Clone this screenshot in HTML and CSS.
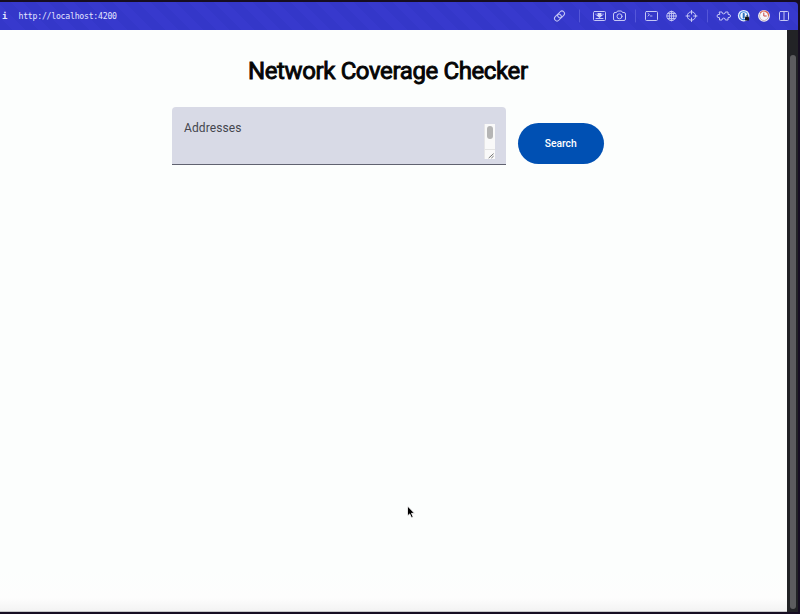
FILE: index.html
```html
<!DOCTYPE html>
<html lang="en">
<head>
<meta charset="utf-8">
<title>Network Coverage Checker</title>
<link rel="stylesheet" href="styles.css">
</head>
<body>
<div class="window">
  <header class="toolbar">
    <span class="info">i</span>
    <span class="url">http://localhost:4200</span>
    <svg class="tools" width="250" height="28" viewBox="550 2 250 28" fill="none" stroke="#c5c7f5" stroke-width="1" stroke-linecap="round" stroke-linejoin="round">
      <g transform="rotate(-45 559.5 16)"><rect x="553.5" y="13.5" width="7.5" height="5" rx="2.5"/><rect x="558" y="13.5" width="7.5" height="5" rx="2.5"/></g>
      <path d="M579.5 10v12M635.500 10v12M707.500 10v12" stroke="#5557d9"/>
      <rect x="593.500" y="11.500" width="12" height="9" rx="1"/>
      <path d="M596 18.500h7M596 14v.5M603 14v.5"/><path d="M597.500 13h4v2h1.500l-3.500 3-3.500-3h1.500z" fill="#d5d6fa" stroke="none"/>
      <path d="M615 12.500h1.500l1-1.500h4l1 1.500h1.500q1.500 0 1.500 1.500v5q0 1.500-1.500 1.500h-9q-1.500 0-1.500-1.500v-5q0-1.500 1.500-1.500z"/><circle cx="619.500" cy="16.300" r="2.500"/>
      <rect x="645.500" y="11.500" width="12" height="9" rx="1"/><path d="M648 13.500l1.500 1.200-1.500 1.300M650.500 16h1.500" stroke-width=".9"/>
      <g stroke-width=".9"><circle cx="671.500" cy="16" r="4.700"/><ellipse cx="671.500" cy="16" rx="2.200" ry="4.700"/><path d="M667 16h9M671.500 11.300v9.400M667.800 13.500h7.400M667.800 18.500h7.400"/></g>
      <circle cx="691.500" cy="16" r="4.200"/><path d="M691.500 10.500v3.500M691.500 18v3.500M686 16h3.500M693.500 16h3.500"/>
      <path d="M719.500 12h2.500q0 1.900 1.700 1.900t1.700-1.900h2.600v2.300q2.500-.2 2.500 1.700t-2.500 1.700v2.300h-2.600q0-1.900-1.700-1.900t-1.700 1.900h-2.500v-2.300q-2.500.2-2.500-1.700t2.500-1.700z"/>
      <g stroke="none"><circle cx="743.700" cy="15.700" r="5.800" fill="#e7efff"/><circle cx="743.700" cy="15.700" r="4.500" fill="#3781dc"/><circle cx="743.700" cy="15.700" r="3.400" fill="#f4f7ff"/><rect x="742.700" y="13" width="2" height="5.500" rx=".7" fill="#286fbc"/><rect x="745" y="17" width="4" height="3.500" rx=".5" fill="#15171c"/></g>
      <path d="M746 17v-.7q1-1.600 2 0v.7" stroke="#15171c" stroke-width=".8"/>
      <circle cx="764" cy="15.800" r="5.900" fill="#f7f6fa" stroke="none"/><path d="M761 12.500a4.600 4.600 0 1 0 7.600 3.300" stroke="#b9a0a5" stroke-width=".8"/><path d="M760.500 12.700a4.600 4.600 0 0 1 8.100 3.100" stroke="#dd6b54" stroke-width="1.200"/><path d="M763.800 13v3h2.500" stroke="#c84743"/>
      <rect x="779.500" y="11.500" width="9" height="9" rx="1"/><path d="M784 12v8.500"/>
    </svg>
  </header>
  <div class="viewport">
    <main class="page">
      <h1>Network Coverage Checker</h1>
      <form class="search">
        <div class="field">
          <label>Addresses</label>
          <div class="scroll">
            <span class="scroll-thumb"></span>
            <svg class="grip" width="10" height="10" viewBox="0 0 10 10" stroke="#555" stroke-width=".9"><path d="M3.500 9L9 4M6.500 9L9 6.800"/></svg>
          </div>
        </div>
        <button type="button">Search</button>
      </form>
    </main>
    <div class="scrollbar"><span></span></div>
  </div>
</div>
<svg class="cursor" width="10" height="15" viewBox="0 0 10 15"><path d="M1.500 1v10l2.200-2.100 1.800 3.900 1.700-.8-1.700-3.700h3z" fill="#000" stroke="#fff" stroke-width=".8"/></svg>
</body>
</html>
```
FILE: styles.css
```css
* { box-sizing: border-box; }
body {
  margin: 0;
  height: 614px;
  overflow: hidden;
  background: #160d22;
  font-family: Roboto, sans-serif;
}
.window {
  display: flex;
  flex-direction: column;
  height: 612px;
  padding-top: 2px;
}
.toolbar {
  display: flex;
  align-items: center;
  flex: 0 0 28px;
  width: 798px;
  border-radius: 0 4px 0 0;
  background: repeating-linear-gradient(45deg, #3437c9 0 9px, #3739cd 9px 18px);
  color: #e4e5ff;
  font: 8.2px/28px "DejaVu Sans Mono", monospace;
}
.url { letter-spacing: -.25px; }
.info {
  width: 18.500px;
  padding-left: 2px;
  font-size: 9px;
  font-weight: bold;
}
.tools { flex: none; margin-left: auto; margin-right: -2px; }
.viewport { display: flex; flex: 1; min-height: 0; }
.page {
  width: 787px;
  padding-top: 25px;
  background: linear-gradient(#fcfefd 0, #fcfefd 540px, #fdfdfd 568px, #f3f3f3 100%);
  border-bottom: 1px solid #c6c6c8;
}
h1 {
  margin: 0 0 20px;
  padding-left: 248px;
  font-size: 24px;
  line-height: 32px;
  font-weight: 400;
  letter-spacing: -.38px;
  -webkit-text-stroke: .9px #050505;
  color: #050505;
  white-space: nowrap;
}
.search { display: flex; align-items: flex-end; margin-left: 172px; }
.field {
  display: flex;
  justify-content: space-between;
  width: 334px;
  height: 58px;
  padding: 12px 11.500px 0 12px;
  border-bottom: 1px solid #606270;
  border-radius: 4px 4px 0 0;
  background: #d8dae6;
}
label { color: #44464e; font-size: 12px; line-height: 18px; letter-spacing: .1px; }
.scroll {
  display: flex;
  flex-direction: column;
  justify-content: space-between;
  align-items: center;
  width: 11px;
  height: 35px;
  margin-top: 5px;
  padding-top: 2px;
  background: #f9f9f9;
  border-left: 1px solid #e5e5e7;
}
.scroll-thumb { width: 6px; height: 13px; border-radius: 3px; background: #b5b5b5; }
.grip { border-top: 1px solid #e4e4e4; }
button {
  width: 86.500px;
  height: 40.500px;
  margin: 0 0 1.500px 11.500px;
  padding: 0;
  border: 0;
  border-radius: 21px;
  background: #0050b3;
  color: #fff;
  font: 500 10.3px/41px Roboto, sans-serif;
}
.scrollbar {
  width: 11px;
  padding: 25px 1px 3px 3px;
  background: #222326;
}
.scrollbar span { display: block; height: 100%; width: 6px; border-radius: 3px; background: #5c5c5f; }
.cursor { position: absolute; left: 406px; top: 505px; }
```
